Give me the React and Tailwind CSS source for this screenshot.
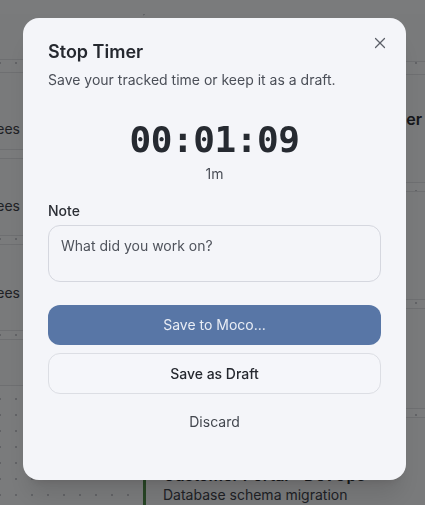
import React, { useState } from "react";
import { X } from "lucide-react";

const leftCards = [
  { h: "h-[78px]", pt: "pt-[46px]", label: "2 employees" },
  { h: "h-[78px]", pt: "pt-[37px]", label: "4 trainees" },
  { h: "h-[87px]", pt: "pt-[38px]", label: "6 attendees" },
  { h: "h-[47px]", pt: "pt-4", label: "" },
];

const rightCards = [
  { h: "h-[109px]", title: "Customer Portal - Release Planner", sub: "Backlog grooming" },
  { h: "h-[109px]", title: "Website Relaunch", sub: "Landing page review" },
  { h: "h-[101px]", title: "Mobile App - Design", sub: "Onboarding screens" },
];

const Board = () => (
  <div
    className="h-screen w-full overflow-hidden bg-[#f5f6f8] bg-[radial-gradient(#c4c7cd_1px,transparent_1.2px)] bg-[size:16px_16px] bg-[position:8px_7px] pt-[14px] flex gap-[7px]"
    style={{ fontFamily: "Inter, 'Noto Sans', sans-serif" }}
  >
    {/* left column */}
    <div className="w-[130px] shrink-0 flex flex-col">
      <div className="h-[46px] bg-[#f3f4f6] border-b border-[#dcdee3]" />
      <div className="flex flex-col gap-2 mt-3">
        {leftCards.map((c, i) => (
          <div
            key={i}
            className={`${c.h} ${c.pt} bg-[#f3f4f6] border-y border-[#dcdee3] flex justify-end pr-[110px] text-sm leading-5 text-[#3f434b] whitespace-nowrap`}
          >
            {c.label}
          </div>
        ))}
      </div>
    </div>

    {/* right column */}
    <div className="flex-1 flex flex-col">
      <div className="h-[49px] bg-[#f3f4f6] border-b border-[#dcdee3] rounded-tl-xl" />
      <div className="flex flex-col gap-2 mt-3">
        {rightCards.map((c, i) => (
          <div
            key={i}
            className={`${c.h} bg-[#f3f4f6] border-y border-[#dcdee3] pl-5 pt-[34px] text-[#2b2e35] whitespace-nowrap overflow-hidden`}
          >
            <div className="text-base leading-5 font-semibold">{c.title}</div>
            <div className="text-sm leading-5 text-[#4b4f58]">{c.sub}</div>
          </div>
        ))}
        <div className="flex-1 bg-[#f3f4f6] border-t border-[#dcdee3] ml-[6px] border-l-[3px] border-l-[#4f8a4a] pl-[17px] pt-[47px] whitespace-nowrap">
          <div className="text-base font-semibold text-[#2b2e35] leading-5">Customer Portal - DevOps</div>
          <div className="text-sm text-[#3f434b] leading-5">Database schema migration</div>
        </div>
      </div>
    </div>
  </div>
);

const StopTimerDialog = () => {
  const [note, setNote] = useState("");
  return (
    <div className="fixed inset-0 bg-black/50">
      <div
        className="absolute left-[23px] top-[18px] w-[383px] h-[462px] rounded-2xl bg-[#f4f5f9] shadow-xl px-[25px] pt-5"
        style={{ fontFamily: "Inter, 'Noto Sans', sans-serif" }}
      >
        <button className="absolute right-[17px] top-[16px] text-[#5b5f68]">
          <X size={18} strokeWidth={1.6} />
        </button>

        <h2 className="text-lg leading-7 font-semibold text-[#25282f]">Stop Timer</h2>
        <p className="mt-1 text-sm leading-5 text-[#4b4f58]">
          Save your tracked time or keep it as a draft.
        </p>

        <div className="mt-[30px] flex flex-col items-center">
          <div
            className="text-[36px] leading-10 font-bold text-[#262a31] tracking-[-0.4px]"
            style={{ fontFamily: "'DejaVu Sans Mono', 'Liberation Mono', monospace" }}
          >
            00:01:09
          </div>
          <div className="mt-1 text-sm leading-5 text-[#4b4f58]">1m</div>
        </div>

        <label className="block mt-[17px] text-sm leading-5 font-medium text-[#2b2e35]">Note</label>
        <textarea
          value={note}
          onChange={(e) => setNote(e.target.value)}
          placeholder="What did you work on?"
          className="mt-1 block w-full h-[57px] resize-none rounded-xl border border-[#d5d7df] bg-[#f4f5f9] px-3 py-2.5 text-sm leading-5 text-[#2b2e35] placeholder:text-[#4f535c] outline-none"
        />

        <div className="mt-[23px] flex flex-col gap-2">
          <button className="h-10 w-full rounded-xl bg-[#5876a6] text-sm text-[#e9edf5]">
            Save to Moco...
          </button>
          <button className="h-[41px] w-full rounded-xl border border-[#dcdee4] bg-[#f5f6fa] text-sm font-medium text-[#25282f]">
            Save as Draft
          </button>
          <button className="h-10 w-full rounded-xl text-sm text-[#42464e]">Discard</button>
        </div>
      </div>
    </div>
  );
};

export default function App() {
  return (
    <div className="relative">
      <Board />
      <StopTimerDialog />
    </div>
  );
}
